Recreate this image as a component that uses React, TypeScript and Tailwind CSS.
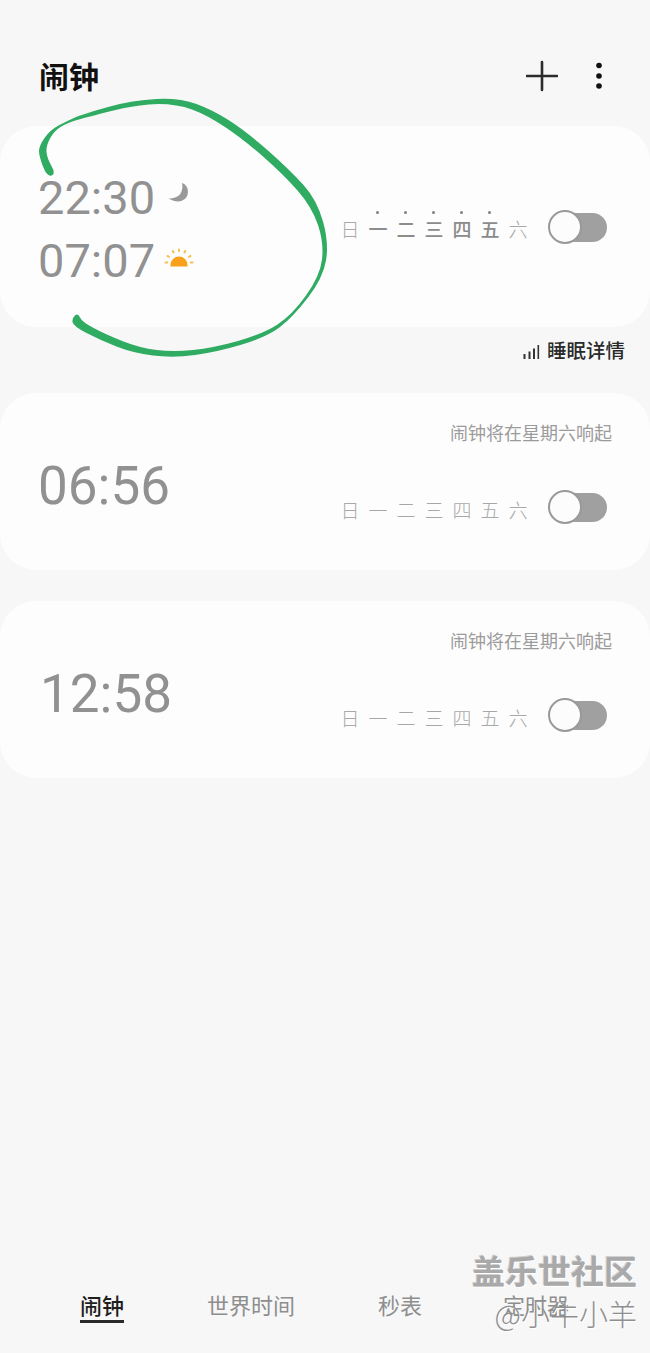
import React from "react";

const CJK = "font-['Noto_Sans_CJK_SC','Noto_Sans',sans-serif]";
const DAYS = ["日", "一", "二", "三", "四", "五", "六"];

function Toggle() {
  return (
    <div className="relative mt-[-4px] h-[34px] w-[59px] shrink-0">
      <div className="absolute right-0 top-[3px] h-[29px] w-[47px] rounded-full bg-[#a0a0a0]" />
      <div className="absolute left-0 top-0 h-[34px] w-[34px] rounded-full border-2 border-[#999999] bg-[#fcfcfc]" />
    </div>
  );
}

function Days({ active }: { active?: boolean }) {
  return (
    <div className="flex items-center">
      {DAYS.map((d, i) => {
        const on = active && i > 0 && i < 6;
        return (
          <div
            key={d}
            className={`relative flex h-[24px] w-[28px] items-center justify-center text-[19px] leading-none ${CJK} ${
              on ? "font-medium text-[#8c8c8c]" : "font-light text-[#a8a8a8]"
            }`}
          >
            {on && <span className="absolute left-[12px] top-[-6px] h-[3px] w-[3px] rounded-full bg-[#808080]" />}
            {d}
          </div>
        );
      })}
    </div>
  );
}

function Moon() {
  return (
    <svg width="22" height="22" viewBox="0 0 22 22">
      <path d="M15 1C20 2.5 22 8 20.5 13C18.5 19 11 22 1.5 16.5C7 16.5 11.5 15 13.5 11.5C15.5 8 15.8 4.5 15 1Z" fill="#999999" />
    </svg>
  );
}

function Sun() {
  return (
    <svg width="30" height="22" viewBox="0 0 30 22">
      <path d="M6.5 18.5V17a8.5 8.5 0 0 1 17 0v1.5Z" fill="#f9a11b" />
      <g stroke="#f3c14f" strokeWidth="2" strokeLinecap="round">
        <path d="M15 1.5v1.6" />
        <path d="M8.8 3l.8 1.5" />
        <path d="M21.2 3l-.8 1.5" />
        <path d="M3.5 8l1.5.8" />
        <path d="M26.5 8l-1.5.8" />
        <path d="M1.5 14.5h1.8" />
        <path d="M28.5 14.5h-1.8" />
      </g>
    </svg>
  );
}

function TimeText({ big, children }: { big?: boolean; children: React.ReactNode }) {
  return (
    <span className={`font-['Roboto',sans-serif] leading-none text-[#919191] ${big ? "text-[53px]" : "text-[47px]"}`}>
      {children}
    </span>
  );
}

function AlarmCard({ time, indent }: { time: string; indent?: boolean }) {
  return (
    <section className="flex h-[177px] flex-col rounded-[36px] bg-[#fdfdfd] pb-[46px] pl-[38px] pr-[43px] pt-[27px]">
      <div className={`mr-[-5px] text-right text-[18px] leading-[24px] text-[#9b9b9b] ${CJK}`}>闹钟将在星期六响起</div>
      <div className="mt-auto flex items-center justify-between">
        <div className={`mt-[-46px] ${indent ? "ml-[2px]" : ""}`}>
          <TimeText big>{time}</TimeText>
        </div>
        <div className="ml-auto flex items-center gap-[16px]">
          <Days />
          <Toggle />
        </div>
      </div>
    </section>
  );
}

const STROKE: [number, number][] = [
  [47, 177], [39, 156], [39, 146], [50, 130], [67, 121], [83, 114], [133, 100], [180, 98], [213, 110], [247, 132], [290, 170], [317, 200],
  [329, 243], [323, 278], [293, 317], [267, 337], [217, 352], [173, 358], [133, 353], [100, 340], [73, 326], [72, 318], [78, 313],
  [82, 322], [107, 335], [140, 348], [173, 352], [213, 348], [263, 334], [292, 315], [320, 276], [324, 243], [312, 207],
  [283, 174], [243, 139], [207, 115], [177, 104], [140, 104], [87, 117], [67, 123], [54, 131], [46, 146], [47, 158], [56, 174],
];

function smooth(points: [number, number][]) {
  const mid = (a: [number, number], b: [number, number]) => [(a[0] + b[0]) / 2, (a[1] + b[1]) / 2];
  const n = points.length;
  const start = mid(points[n - 1], points[0]);
  let d = `M${start[0]} ${start[1]}`;
  for (let i = 0; i < n; i++) {
    const m = mid(points[i], points[(i + 1) % n]);
    d += `Q${points[i][0]} ${points[i][1]} ${m[0]} ${m[1]}`;
  }
  return d + "Z";
}

export default function App() {
  return (
    <div className={`relative flex h-[1353px] w-[650px] flex-col overflow-hidden bg-[#f7f7f7] ${CJK}`}>
      <header className="flex h-[126px] shrink-0 items-start justify-between pl-[39px] pr-[47px] pt-[54px]">
        <h1 className="text-[30px] font-bold leading-[42px] text-[#111111]">闹钟</h1>
        <div className="flex items-center gap-[37px] pt-[6px]">
          <svg width="32" height="32" viewBox="0 0 32 32">
            <path d="M16 2v28M1 16h30" stroke="#2b2b2b" strokeWidth="2.6" strokeLinecap="round" />
          </svg>
          <svg width="8" height="30" viewBox="0 0 8 30">
            <circle cx="4" cy="4.5" r="2.8" fill="#111" />
            <circle cx="4" cy="15" r="2.8" fill="#111" />
            <circle cx="4" cy="25" r="2.8" fill="#111" />
          </svg>
        </div>
      </header>

      <section className="flex h-[201px] shrink-0 items-center justify-between rounded-[36px] bg-[#fdfdfd] pl-[38px] pr-[43px]">
        <div className="flex flex-col gap-[16px] pt-[4px]">
          <div className="flex items-center gap-[12px]">
            <TimeText>22:30</TimeText>
            <span className="mt-[-8px]"><Moon /></span>
          </div>
          <div className="flex items-center gap-[9px]">
            <TimeText>07:07</TimeText>
            <span className="mt-[-3px]"><Sun /></span>
          </div>
        </div>
        <div className="flex items-center gap-[16px] pt-[4px]">
          <Days active />
          <Toggle />
        </div>
      </section>

      <div className="flex h-[66px] shrink-0 items-start justify-end gap-[7px] pr-[25px] pt-[8px]">
        <svg className="mt-[9px]" width="17" height="16" viewBox="0 0 17 16">
          <g fill="#333">
            <rect x="0.5" y="10" width="2" height="5" />
            <rect x="5.5" y="7.5" width="2" height="7.5" />
            <rect x="10" y="4.5" width="2" height="10.5" />
            <rect x="14.5" y="1" width="1.6" height="14" />
          </g>
        </svg>
        <span className="text-[19.5px] font-medium leading-[30px] text-[#2a2a2a]">睡眠详情</span>
      </div>

      <div className="flex shrink-0 flex-col gap-[31px]">
        <AlarmCard time="06:56" />
        <AlarmCard time="12:58" indent />
      </div>

      <nav className="mt-auto mb-[33px] flex items-start gap-[83px] pl-[80px] text-[22px] leading-[32px] text-[#8e8e8e]">
        <div className="relative">
          <span className="font-medium text-[#1f1f1f]">闹钟</span>
          <div className="absolute bottom-[-3px] left-0 h-[3px] w-full bg-[#2a2a2a]" />
        </div>
        <span>世界时间</span>
        <span>秒表</span>
        <span className="ml-[-2px]">定时器</span>
      </nav>

      {/* hand-drawn annotation over the screenshot */}
      <svg className="pointer-events-none absolute left-0 top-0" width="650" height="400" viewBox="0 0 650 400">
        <path d={smooth(STROKE)} fill="#2fab62" />
      </svg>

      {/* watermark */}
      <div className="pointer-events-none absolute right-[13px] top-[1249px] flex flex-col items-end">
        <span className="text-[33px] font-bold leading-[42px] text-[#a9a9a9] [text-shadow:1px_1px_0_#ffffff,-1px_-1px_0_#d0d0d0]">盖乐世社区</span>
        <span className="mt-[3px] text-[29px] font-light leading-[38px] text-[#8f8f8f] [text-shadow:1px_1px_0_#ffffff]">@小牛小羊</span>
      </div>
    </div>
  );
}
